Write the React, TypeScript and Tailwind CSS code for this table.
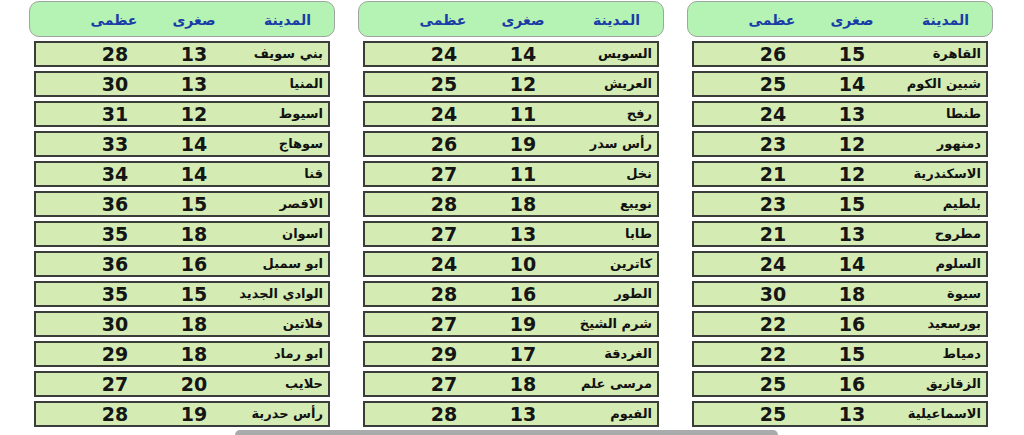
const tables: [string, number, number][][] = [
  [
    ["القاهرة", 15, 26],
    ["شبين الكوم", 14, 25],
    ["طنطا", 13, 24],
    ["دمنهور", 12, 23],
    ["الاسكندرية", 12, 21],
    ["بلطيم", 15, 23],
    ["مطروح", 13, 21],
    ["السلوم", 14, 24],
    ["سيوة", 18, 30],
    ["بورسعيد", 16, 22],
    ["دمياط", 15, 22],
    ["الزقازيق", 16, 25],
    ["الاسماعيلية", 13, 25],
  ],
  [
    ["السويس", 14, 24],
    ["العريش", 12, 25],
    ["رفح", 11, 24],
    ["رأس سدر", 19, 26],
    ["نخل", 11, 27],
    ["نويبع", 18, 28],
    ["طابا", 13, 27],
    ["كاترين", 10, 24],
    ["الطور", 16, 28],
    ["شرم الشيخ", 19, 27],
    ["الغردقة", 17, 29],
    ["مرسى علم", 18, 27],
    ["الفيوم", 13, 28],
  ],
  [
    ["بني سويف", 13, 28],
    ["المنيا", 13, 30],
    ["اسيوط", 12, 31],
    ["سوهاج", 14, 33],
    ["قنا", 14, 34],
    ["الاقصر", 15, 36],
    ["اسوان", 18, 35],
    ["ابو سمبل", 16, 36],
    ["الوادي الجديد", 15, 35],
    ["فلاتين", 18, 30],
    ["ابو رماد", 18, 29],
    ["حلايب", 20, 27],
    ["رأس حدربة", 19, 28],
  ],
];

const Table = ({ rows }: { rows: [string, number, number][] }) => (
  <div className="w-[306px] flex flex-col">
    {/* header pill */}
    <div className="h-[36px] rounded-[10px] border border-[#9ea59e] bg-[#b5f3b4] px-[5px] flex items-center pt-[3px] text-[14px] font-bold text-[#1a3ca6]">
      <span className="w-[96px] text-right pr-[18px]">المدينة</span>
      <span className="w-[78px] text-center">صغرى</span>
      <span className="w-[82px] text-center">عظمى</span>
    </div>
    <div className="mt-[4px] flex flex-col gap-[4px] px-[5px]">
      {rows.map(([city, min, max]) => (
        <div
          key={city}
          className="h-[26px] border-2 border-[#3b3d3a] bg-[#d4ecb3] flex items-center"
        >
          <span className="w-[95px] text-right pr-[5px] text-[13px] font-bold text-[#111] whitespace-nowrap">
            {city}
          </span>
          <span className="w-[78px] text-center text-[19px] font-bold text-[#151515] leading-none">
            {min}
          </span>
          <span className="w-[80px] text-center text-[19px] font-bold text-[#151515] leading-none">
            {max}
          </span>
        </div>
      ))}
    </div>
  </div>
);

export default function App() {
  return (
    <div
      className="w-[1024px] h-[435px] bg-white overflow-hidden flex flex-col"
      style={{ fontFamily: '"DejaVu Sans", "Noto Sans", sans-serif' }}
    >
      <div dir="rtl" className="flex gap-[23px] pr-[31px] pt-[1px]">
        {tables.map((rows, i) => (
          <Table key={i} rows={rows} />
        ))}
      </div>
      <div className="mt-[3px] ml-[235px] w-[543px] h-[10px] rounded-t-[6px] bg-[#a9aaab]" />
    </div>
  );
}
